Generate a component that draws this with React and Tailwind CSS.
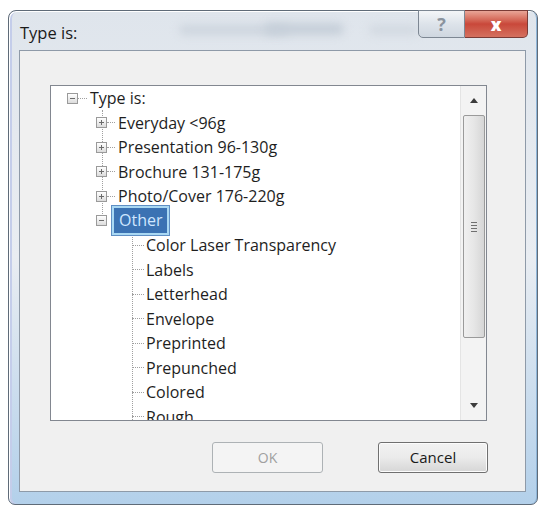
import React from "react";

const font = { fontFamily: '"Open Sans", "Noto Sans", sans-serif' };

function Expander({ open }) {
  return (
    <span className="relative inline-flex h-[11px] w-[11px] shrink-0 items-center justify-center border border-[#9a9a9a] bg-gradient-to-b from-white to-[#dcdcdc]">
      <span className="absolute h-[1px] w-[5px] bg-[#6b6b6b]" />
      {!open && <span className="absolute h-[5px] w-[1px] bg-[#6b6b6b]" />}
    </span>
  );
}

const children = [
  "Everyday <96g",
  "Presentation 96-130g",
  "Brochure 131-175g",
  "Photo/Cover 176-220g",
];
const grand = [
  "Color Laser Transparency",
  "Labels",
  "Letterhead",
  "Envelope",
  "Preprinted",
  "Prepunched",
  "Colored",
  "Rough",
];

function Row({ children }) {
  return <div className="relative flex h-[24.5px] items-center">{children}</div>;
}

export default function App() {
  return (
    <div className="h-[507px] w-[543px] overflow-hidden bg-white pl-[8px] pt-[10px]" style={font}>
      <div className="relative flex h-[495px] w-[530px] flex-col rounded-t-[8px] rounded-b-[7px] border border-[#5f6b78] bg-gradient-to-b from-[#dfe5ec] via-[#e9edf2] to-[#b3d0ea] shadow-[inset_1px_1px_0_#ffffff,inset_-1px_0_0_#8fb6d9,inset_3px_0_0_#c4cdea]">
        {/* title bar */}
        <div className="relative flex h-[39px] items-start">
          <div className="pl-[11px] pt-[11px] text-[16.5px] leading-[22px] text-[#1a1a1a]">Type is:</div>
          <div className="absolute left-[170px] top-[14px] h-[10px] w-[110px] rounded-full bg-[#cdd5de] blur-[4px]" />
          <div className="absolute left-[255px] top-[12px] h-[12px] w-[80px] rounded-full bg-[#c6cfd9] blur-[4px]" />
          <div className="absolute left-[360px] top-[14px] h-[10px] w-[50px] rounded-full bg-[#d2d9e1] blur-[4px]" />
          <div className="absolute right-[9px] top-[-1px] flex h-[28px]">
            <div className="flex w-[47px] items-center justify-center rounded-bl-[5px] border border-[#7d8793] bg-gradient-to-b from-[#f4f6f8] via-[#dde3ea] to-[#cfd7e0] text-[18px] font-bold leading-none text-[#8a939e]">
              ?
            </div>
            <div className="flex w-[63px] items-center justify-center rounded-br-[5px] border border-l-0 border-[#7a3b36] bg-gradient-to-b from-[#e8a597] via-[#c9483a] to-[#d4705f] text-[17px] font-extrabold leading-none text-white">
              x
            </div>
          </div>
        </div>
        {/* client */}
        <div className="ml-[10px] mr-[11px] mb-[12px] flex-1 border border-[#8e9aa8] bg-[#f0f0f0] pl-[30px] pt-[34px]">
          <div className="flex h-[336px] w-[437px] border border-[#828790] bg-white">
            <div className="relative flex-1 overflow-hidden text-[16px] text-[#1e1e1e]">
              {/* tree lines */}
              <div className="absolute left-[51px] top-[24px] h-[114px] border-l border-dotted border-[#a0a0a0]" />
              <div className="absolute left-[81px] top-[146px] h-[210px] border-l border-dotted border-[#a0a0a0]" />
              <Row>
                <div className="ml-[16px] flex items-center">
                  <Expander open />
                  <span className="w-[9px] border-t border-dotted border-[#a0a0a0]" />
                  <span className="ml-[3px]">Type is:</span>
                </div>
              </Row>
              {children.map((c) => (
                <Row key={c}>
                  <div className="ml-[45px] flex items-center">
                    <Expander />
                    <span className="w-[8px] border-t border-dotted border-[#a0a0a0]" />
                    <span className="ml-[3px]">{c}</span>
                  </div>
                </Row>
              ))}
              <Row>
                <div className="ml-[45px] flex items-center">
                  <Expander open />
                  <span className="ml-[5px] border-2 border-[#a9d8f3] bg-[#3b72b3] px-[5px] leading-[25px] text-[#cfe6ff] outline outline-1 outline-[#5f8fc4]">
                    Other
                  </span>
                </div>
              </Row>
              {grand.map((g) => (
                <Row key={g}>
                  <div className="ml-[81px] flex items-center">
                    <span className="w-[12px] border-t border-dotted border-[#a0a0a0]" />
                    <span className="ml-[2px]">{g}</span>
                  </div>
                </Row>
              ))}
            </div>
            {/* scrollbar */}
            <div className="flex w-[26px] flex-col items-center border-l border-[#e4e4e4] bg-[#f3f3f3]">
              <div className="flex h-[29px] items-center justify-center">
                <svg width="8" height="5" viewBox="0 0 8 5"><path d="M0 5 L4 0 L8 5 Z" fill="#3c3c3c" /></svg>
              </div>
              <div className="flex h-[223px] w-[22px] items-center justify-center rounded-[2px] border border-[#9a9a9a] bg-gradient-to-r from-[#f0f0f0] via-[#e6e6e6] to-[#d6d6d6]">
                <div className="flex flex-col gap-[2px]">
                  <span className="h-[1px] w-[6px] bg-[#6f6f6f]" />
                  <span className="h-[1px] w-[6px] bg-[#6f6f6f]" />
                  <span className="h-[1px] w-[6px] bg-[#6f6f6f]" />
                  <span className="h-[1px] w-[6px] bg-[#6f6f6f]" />
                </div>
              </div>
              <div className="flex-1" />
              <div className="flex h-[29px] items-center justify-center">
                <svg width="8" height="5" viewBox="0 0 8 5"><path d="M0 0 L4 5 L8 0 Z" fill="#3c3c3c" /></svg>
              </div>
            </div>
          </div>
          <div className="mt-[21px] flex">
            <div className="ml-[162px] flex h-[31px] w-[111px] items-center justify-center rounded-[3px] border border-[#adb2b5] bg-[#f4f4f4] text-[14px] text-[#a0a0a0]">
              OK
            </div>
            <div className="ml-[55px] flex h-[31px] w-[110px] items-center justify-center rounded-[3px] border border-[#707070] bg-gradient-to-b from-[#f2f2f2] via-[#ebebeb] to-[#d6d6d6] text-[15px] text-[#1a1a1a] shadow-[inset_0_0_0_1px_#fcfcfc]">
              Cancel
            </div>
          </div>
        </div>
      </div>
    </div>
  );
}
